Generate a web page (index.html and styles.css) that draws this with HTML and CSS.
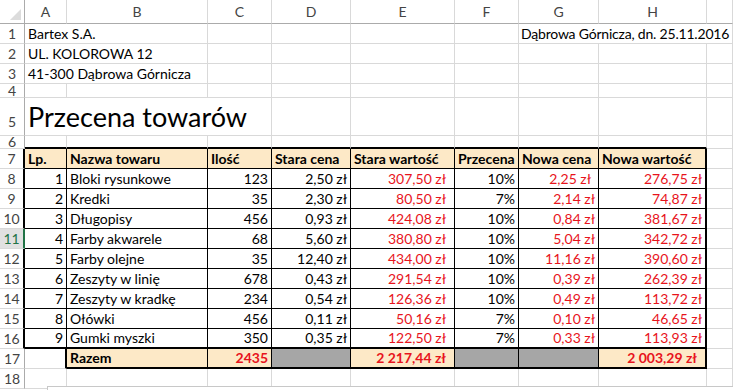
FILE: index.html
```html
<!DOCTYPE html>
<html lang="pl">
<head>
<meta charset="utf-8">
<title>Przecena towarów</title>
<link rel="stylesheet" href="styles.css">
</head>
<body>
<div class="sheet">
  <!-- column headers -->
  <div class="corner"><svg width="24" height="23" viewBox="0 0 24 23"><polygon points="21,9 21,20 10,20" fill="#dcdcdc"/></svg></div>
  <div class="c ch">A</div><div class="c ch">B</div><div class="c ch">C</div><div class="c ch">D</div><div class="c ch">E</div><div class="c ch">F</div><div class="c ch">G</div><div class="c ch">H</div><div class="c ch"></div>

  <!-- row 1 -->
  <div class="rh">1</div>
  <div class="c s2">Bartex S.A.</div><div class="c"></div><div class="c"></div><div class="c"></div><div class="c"></div>
  <div class="c s3 date">Dąbrowa Górnicza, dn. 25.11.2016</div>

  <!-- row 2 -->
  <div class="rh">2</div>
  <div class="c s2">UL. KOLOROWA 12</div><div class="c"></div><div class="c"></div><div class="c"></div><div class="c"></div><div class="c"></div><div class="c"></div><div class="c"></div>

  <!-- row 3 -->
  <div class="rh">3</div>
  <div class="c s2">41-300 Dąbrowa Górnicza</div><div class="c"></div><div class="c"></div><div class="c"></div><div class="c"></div><div class="c"></div><div class="c"></div><div class="c"></div>

  <!-- row 4 -->
  <div class="rh">4</div>
  <div class="c"></div><div class="c"></div><div class="c"></div><div class="c"></div><div class="c"></div><div class="c"></div><div class="c"></div><div class="c"></div><div class="c"></div>

  <!-- row 5 -->
  <div class="rh r5">5</div>
  <div class="c s3 title">Przecena towarów</div><div class="c"></div><div class="c"></div><div class="c"></div><div class="c"></div><div class="c"></div><div class="c"></div>

  <!-- row 6 -->
  <div class="rh">6</div>
  <div class="c kb"></div><div class="c kb"></div><div class="c kb"></div><div class="c kb"></div><div class="c kb"></div><div class="c kb"></div><div class="c kb"></div><div class="c kb"></div><div class="c"></div>

  <!-- row 7 -->
  <div class="rh kr">7</div>
  <div class="c t h">Lp.</div><div class="c t h">Nazwa towaru</div><div class="c t h">Ilość</div><div class="c t h">Stara cena</div><div class="c t h">Stara wartość</div><div class="c t h">Przecena</div><div class="c t h">Nowa cena</div><div class="c t h kr">Nowa wartość</div><div class="c"></div>

  <!-- row 8 -->
  <div class="rh kr">8</div>
  <div class="c t n">1</div><div class="c t">Bloki rysunkowe</div><div class="c t n">123</div><div class="c t n">2,50 zł</div><div class="c t n r pe">307,50 zł</div><div class="c t n">10%</div><div class="c t n r pg">2,25 zł</div><div class="c t n r ph kr">276,75 zł</div><div class="c"></div>

  <!-- row 9 -->
  <div class="rh kr">9</div>
  <div class="c t n">2</div><div class="c t">Kredki</div><div class="c t n">35</div><div class="c t n">2,30 zł</div><div class="c t n r pe">80,50 zł</div><div class="c t n">7%</div><div class="c t n r">2,14 zł</div><div class="c t n r ph kr">74,87 zł</div><div class="c"></div>

  <!-- row 10 -->
  <div class="rh kr">10</div>
  <div class="c t n">3</div><div class="c t">Długopisy</div><div class="c t n">456</div><div class="c t n">0,93 zł</div><div class="c t n r pe">424,08 zł</div><div class="c t n">10%</div><div class="c t n r">0,84 zł</div><div class="c t n r ph kr">381,67 zł</div><div class="c"></div>

  <!-- row 11 -->
  <div class="rh sel">11</div>
  <div class="c t n">4</div><div class="c t">Farby akwarele</div><div class="c t n">68</div><div class="c t n">5,60 zł</div><div class="c t n r pe">380,80 zł</div><div class="c t n">10%</div><div class="c t n r">5,04 zł</div><div class="c t n r ph kr">342,72 zł</div><div class="c"></div>

  <!-- row 12 -->
  <div class="rh kr">12</div>
  <div class="c t n">5</div><div class="c t">Farby olejne</div><div class="c t n">35</div><div class="c t n">12,40 zł</div><div class="c t n r pe">434,00 zł</div><div class="c t n">10%</div><div class="c t n r">11,16 zł</div><div class="c t n r ph kr">390,60 zł</div><div class="c"></div>

  <!-- row 13 -->
  <div class="rh kr">13</div>
  <div class="c t n">6</div><div class="c t">Zeszyty w linię</div><div class="c t n">678</div><div class="c t n">0,43 zł</div><div class="c t n r pe">291,54 zł</div><div class="c t n">10%</div><div class="c t n r">0,39 zł</div><div class="c t n r ph kr">262,39 zł</div><div class="c"></div>

  <!-- row 14 -->
  <div class="rh kr">14</div>
  <div class="c t n">7</div><div class="c t">Zeszyty w kradkę</div><div class="c t n">234</div><div class="c t n">0,54 zł</div><div class="c t n r pe">126,36 zł</div><div class="c t n">10%</div><div class="c t n r">0,49 zł</div><div class="c t n r ph kr">113,72 zł</div><div class="c"></div>

  <!-- row 15 -->
  <div class="rh kr">15</div>
  <div class="c t n">8</div><div class="c t">Ołówki</div><div class="c t n">456</div><div class="c t n">0,11 zł</div><div class="c t n r pe">50,16 zł</div><div class="c t n">7%</div><div class="c t n r">0,10 zł</div><div class="c t n r ph kr">46,65 zł</div><div class="c"></div>

  <!-- row 16 -->
  <div class="rh kr">16</div>
  <div class="c t kb n">9</div><div class="c t kb">Gumki myszki</div><div class="c t kb n">350</div><div class="c t kb n">0,35 zł</div><div class="c t kb n r pe">122,50 zł</div><div class="c t kb n">7%</div><div class="c t kb n r">0,33 zł</div><div class="c t kb n r ph kr">113,93 zł</div><div class="c"></div>

  <!-- row 17 -->
  <div class="rh">17</div>
  <div class="c kr"></div><div class="c t kb h">Razem</div><div class="c t kb h n r">2435</div><div class="c t kb g"></div><div class="c t kb h n r pe">2 217,44 zł</div><div class="c t kb g"></div><div class="c t kb g"></div><div class="c t kb h n r pe kr">2 003,29 zł</div><div class="c"></div>

  <!-- row 18 -->
  <div class="rh">18</div>
  <div class="c"></div><div class="c"></div><div class="c"></div><div class="c"></div><div class="c"></div><div class="c"></div><div class="c"></div><div class="c"></div><div class="c"></div>
</div>
<div class="shape"></div>
</body>
</html>
```
FILE: styles.css
```css
* { box-sizing: border-box; }
html, body { margin: 0; padding: 0; background: #fff; }
body {
  width: 733px;
  height: 390px;
  overflow: hidden;
  position: relative;
  font-family: Lato, "Open Sans", sans-serif;
  font-size: 14px;
  color: #000;
}
.sheet {
  display: grid;
  grid-template-columns: 25px 42px 141px 64px 79px 104px 64px 80px 108px 26px;
  grid-template-rows: 24px 20px 20px 20px 14px 38px 13px repeat(12, 20px);
}
.c {
  border-right: 1px solid #d9d9d9;
  border-bottom: 1px solid #d9d9d9;
  display: flex;
  align-items: flex-end;
  padding: 0 3px 1px 3px;
  line-height: 16px;
  white-space: nowrap;
  min-width: 0;
}
.corner {
  border-right: 1px solid #ababab;
  border-bottom: 1px solid #ababab;
}
.corner svg { display: block; }
.ch {
  justify-content: center;
  align-items: center;
  padding: 0;
  color: #444;
  border-bottom-color: #ababab;
}
.rh {
  display: flex;
  align-items: center;
  justify-content: center;
  color: #444;
  border-right: 1px solid #ababab;
  border-bottom: 1px solid #d9d9d9;
  line-height: 16px;
}
.r5 { padding-top: 11px; }
.sel {
  background: #e1e1e1;
  color: #217346;
  border-right: 2px solid #217346;
}
.s2 { grid-column: span 2; }
.s3 { grid-column: span 3; }
.date {
  padding-left: 2px;
  letter-spacing: -0.2px;
}
.title {
  font-size: 27px;
  line-height: 32px;
  padding-bottom: 2px;
}
.t { border-right-color: #000; border-bottom-color: #000; }
.kb { border-bottom: 2px solid #000; }
.kr { border-right: 2px solid #000; }
.h { background: #fde9c7; font-weight: 700; }
.g { background: #a6a6a6; }
.n { justify-content: flex-end; }
.r { color: #e8141c; }
.pe { padding-right: 8px; }
.pg { padding-right: 7px; }
.ph { padding-right: 3px; }
.shape {
  position: absolute;
  left: 47px;
  top: 386px;
  width: 686px;
  height: 4px;
  border: 1px solid #c8c8c8;
  border-right: 0;
  border-bottom: 0;
  background: #fff;
}
```
